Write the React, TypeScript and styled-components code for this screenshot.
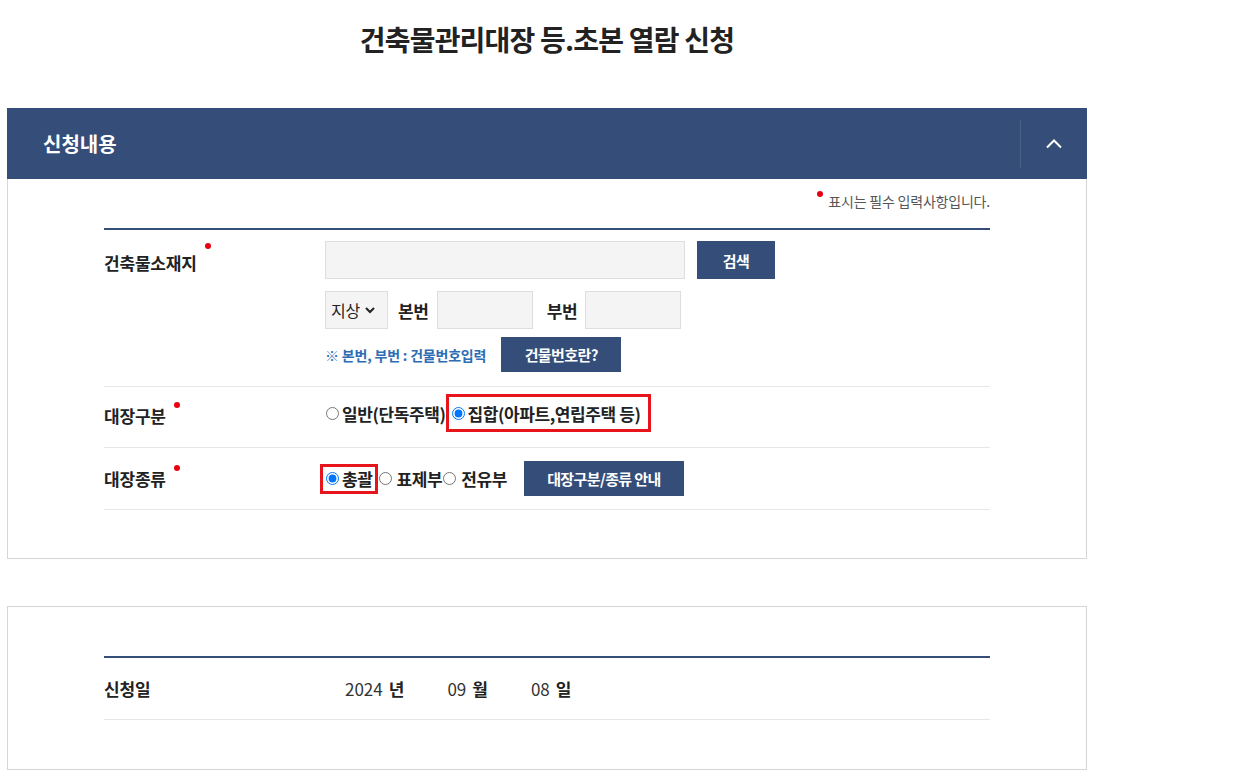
import React from 'react';
import styled, {createGlobalStyle} from 'styled-components';

const navy = '#344e79';

const GlobalStyle = createGlobalStyle`
  body {
    margin: 0;
    background: #fff;
    color: #222;
    font-family: 'Noto Sans CJK KR', 'Noto Sans', sans-serif;
    -webkit-font-smoothing: antialiased;
  }
  * { box-sizing: border-box; }
`;

const Page = styled.div`
  width: 1080px;
  margin-left: 7px;
`;

const Title = styled.h1`
  margin: 0 0 50px;
  padding-top: 21px;
  line-height: 37px;
  font-size: 28px;
  font-weight: 700;
  letter-spacing: -0.8px;
  text-align: center;
  color: #222;
`;

const Header = styled.div`
  display: flex;
  align-items: center;
  height: 71px;
  padding-left: 36px;
  background: ${navy};
`;

const HeaderTitle = styled.h2`
  flex: 1;
  margin: 0;
  font-size: 20px;
  font-weight: 700;
  letter-spacing: 0;
  color: #fff;
`;

const Toggle = styled.button`
  display: flex;
  align-items: center;
  justify-content: center;
  width: 67px;
  height: 48px;
  padding: 0;
  border: none;
  border-left: 1px solid #4a618a;
  background: transparent;
  cursor: pointer;
`;

const Panel = styled.div<{$top?: boolean}>`
  border: 1px solid #d6d6d6;
  border-top: ${({$top}) => ($top ? '1px solid #d6d6d6' : 'none')};
  padding: ${({$top}) => ($top ? '49px 96px 49px' : '0 96px 48px')};
  margin-bottom: 47px;
`;

const Note = styled.p`
  height: 49px;
  margin: 0;
  padding-top: 12px;
  text-align: right;
  font-size: 14px;
  letter-spacing: -0.2px;
  color: #555;
`;

const Dot = styled.span<{$top: number}>`
  display: inline-block;
  width: 6px;
  height: 6px;
  border-radius: 50%;
  background: #e60012;
  position: relative;
  top: ${({$top}) => $top}px;
  margin: 0 5px 0 8px;
`;

const Table = styled.div`
  border-top: 2px solid ${navy};
`;

const Row = styled.div<{$pad: string; $align?: string}>`
  display: grid;
  grid-template-columns: 221px 1fr;
  align-items: ${({$align}) => $align || 'center'};
  padding: ${({$pad}) => $pad};
  border-bottom: 1px solid #e6e6e6;
`;

const Label = styled.div<{$lh?: number; $pt?: number}>`
  font-size: 17px;
  font-weight: 700;
  letter-spacing: -0.2px;
  line-height: ${({$lh}) => $lh || 24}px;
  padding-top: ${({$pt}) => $pt || 0}px;
  color: #222;
`;

const Stack = styled.div`
  display: flex;
  flex-direction: column;
`;

const Line = styled.div<{$gap: number; $mt?: number}>`
  display: flex;
  align-items: center;
  gap: ${({$gap}) => $gap}px;
  margin-top: ${({$mt}) => $mt || 0}px;
`;

const TextInput = styled.input<{$w: number}>`
  width: ${({$w}) => $w}px;
  height: 38px;
  border: 1px solid #dedede;
  background: #f4f4f4;
  padding: 0 10px;
  font: inherit;
`;

const Button = styled.button<{$w: number; $h: number; $ml?: number}>`
  width: ${({$w}) => $w}px;
  height: ${({$h}) => $h}px;
  margin-left: ${({$ml}) => $ml || 0}px;
  padding: 0;
  border: none;
  background: ${navy};
  color: #fff;
  font-family: inherit;
  font-size: 15px;
  font-weight: 700;
  letter-spacing: -0.6px;
  cursor: pointer;
`;

const SelectBox = styled.label`
  display: inline-flex;
  align-items: center;
  gap: 4px;
  width: 63px;
  height: 38px;
  padding-left: 5px;
  border: 1px solid #dedede;
  background: #f4f4f4;
  select {
    appearance: none;
    border: none;
    background: transparent;
    padding: 0;
    font-family: inherit;
    font-size: 16px;
    color: #222;
    letter-spacing: -0.3px;
    outline: none;
  }
`;

const FieldName = styled.span<{$ml: number}>`
  margin-left: ${({$ml}) => $ml}px;
  font-size: 17px;
  font-weight: 700;
  letter-spacing: -0.3px;
  color: #222;
`;

const Hint = styled.span`
  font-size: 14px;
  font-weight: 700;
  letter-spacing: -0.2px;
  color: #2d6db4;
`;

const Radios = styled.div`
  display: flex;
  align-items: center;
`;

const Option = styled.label<{$gap?: number}>`
  display: inline-flex;
  align-items: center;
  font-size: 17px;
  font-weight: 700;
  letter-spacing: -0.4px;
  color: #222;
  input {
    width: 13px;
    height: 13px;
    margin: 0 ${({$gap}) => $gap || 3}px 0 1px;
  }
`;

const Highlight = styled.span<{$h: number; $pad: string; $ml?: number}>`
  display: inline-flex;
  align-items: center;
  height: ${({$h}) => $h}px;
  border: 3px solid #e8141b;
  padding: ${({$pad}) => $pad};
  margin-left: ${({$ml}) => $ml || 0}px;
`;

const DateRow = styled.div`
  display: flex;
  align-items: center;
  gap: 43px;
  padding-left: 20px;
`;

const DatePart = styled.span`
  font-size: 17px;
  letter-spacing: 0;
  color: #333;
  b {
    margin-left: 6px;
    font-weight: 700;
    color: #222;
  }
`;

const Chevron = () => (
  <svg width="18" height="11" viewBox="0 0 18 11" fill="none">
    <path d="M2 9.5 L9 2.5 L16 9.5" stroke="#fff" strokeWidth="2" />
  </svg>
);

const Caret = () => (
  <svg width="12" height="8" viewBox="0 0 12 8" fill="none">
    <path d="M2 2 L6 6 L10 2" stroke="#222" strokeWidth="2" />
  </svg>
);

const App: React.FC = () => {
  return (
    <Page>
      <GlobalStyle />
      <Title>건축물관리대장 등.초본 열람 신청</Title>

      <Header>
        <HeaderTitle>신청내용</HeaderTitle>
        <Toggle aria-label="접기">
          <Chevron />
        </Toggle>
      </Header>
      <Panel>
        <Note>
          <Dot $top={-10} />표시는 필수 입력사항입니다.
        </Note>
        <Table>
          <Row $pad="11px 0 14px" $align="start">
            <Label $lh={38} $pt={3}>
              건축물소재지<Dot $top={-21} />
            </Label>
            <Stack>
              <Line $gap={12}>
                <TextInput $w={360} />
                <Button $w={78} $h={38}>검색</Button>
              </Line>
              <Line $gap={8} $mt={12}>
                <SelectBox>
                  <select defaultValue="지상">
                    <option>지상</option>
                    <option>지하</option>
                  </select>
                  <Caret />
                </SelectBox>
                <FieldName $ml={2}>본번</FieldName>
                <TextInput $w={96} />
                <FieldName $ml={6}>부번</FieldName>
                <TextInput $w={96} />
              </Line>
              <Line $gap={15} $mt={8}>
                <Hint>※ 본번, 부번 : 건물번호입력</Hint>
                <Button $w={120} $h={35}>건물번호란?</Button>
              </Line>
            </Stack>
          </Row>

          <Row $pad="7px 0 15px">
            <Label $pt={5}>
              대장구분<Dot $top={-15} />
            </Label>
            <Radios>
              <Option>
                <input type="radio" name="kind" />
                일반(단독주택)
              </Option>
              <Highlight $h={38} $pad="0 7px 0 2px">
                <Option>
                  <input type="radio" name="kind" defaultChecked />
                  집합(아파트,연립주택 등)
                </Option>
              </Highlight>
            </Radios>
          </Row>

          <Row $pad="13px 0 13px">
            <Label>
              대장종류<Dot $top={-15} />
            </Label>
            <Radios>
              <Highlight $h={30} $pad="0 3px 0 2px" $ml={-5}>
                <Option>
                  <input type="radio" name="type" defaultChecked />
                  총괄
                </Option>
              </Highlight>
              <Option $gap={4}>
                <input type="radio" name="type" />
                표제부
              </Option>
              <Option $gap={5}>
                <input type="radio" name="type" />
                전유부
              </Option>
              <Button $w={160} $h={35} $ml={17}>대장구분/종류 안내</Button>
            </Radios>
          </Row>
        </Table>
      </Panel>

      <Panel $top>
        <Table>
          <Row $pad="18px 0 18px">
            <Label>신청일</Label>
            <DateRow>
              <DatePart>2024<b>년</b></DatePart>
              <DatePart>09<b>월</b></DatePart>
              <DatePart>08<b>일</b></DatePart>
            </DateRow>
          </Row>
        </Table>
      </Panel>
    </Page>
  );
};

export default App;
